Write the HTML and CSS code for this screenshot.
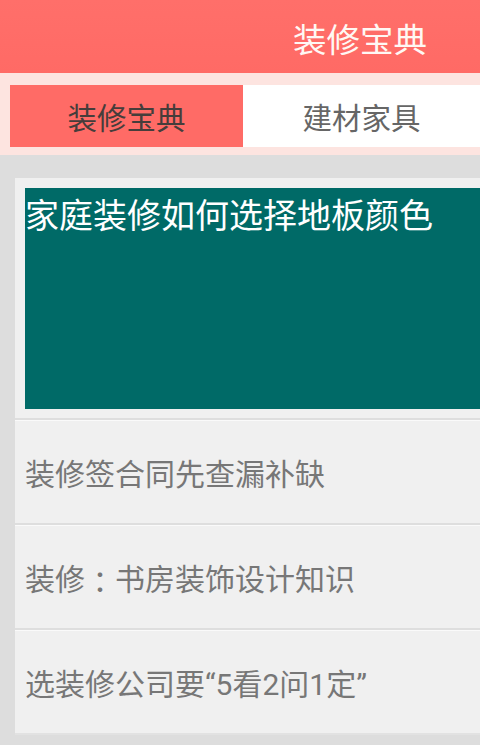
FILE: index.html
```html
<!DOCTYPE html>
<html lang="zh-CN">
<head>
<meta charset="utf-8">
<title>装修宝典</title>
<link rel="stylesheet" href="styles.css">
</head>
<body>
<header class="topbar">
  <h1 class="topbar-title">装修宝典</h1>
</header>
<nav class="tabs">
  <div class="tab tab-active">装修宝典</div>
  <div class="tab">建材家具</div>
</nav>
<main class="content">
  <section class="card">
    <div class="feature">
      <div class="feature-box">家庭装修如何选择地板颜色</div>
    </div>
    <div class="row">装修签合同先查漏补缺</div>
    <div class="row">装修<span class="punct">：</span>书房装饰设计知识</div>
    <div class="row">选装修公司要“5看2问1定”</div>
  </section>
</main>
</body>
</html>
```

FILE: styles.css
```css
html, body {
  margin: 0;
  padding: 0;
}
body {
  width: 480px;
  height: 745px;
  overflow: hidden;
  background: #dddddd;
  font-family: "Noto Sans CJK SC", "Noto Sans", sans-serif;
}
.topbar {
  height: 73px;
  background: linear-gradient(#ff6f6a, #ff6a65);
  display: flex;
  align-items: center;
  justify-content: flex-end;
  padding-right: 53px;
}
.topbar-title {
  margin: 0;
  font-size: 33.5px;
  font-weight: normal;
  line-height: 1;
  color: #fff8f4;
  padding-top: 2px;
}
.tabs {
  height: 62px;
  background: #fde4e0;
  padding: 12px 0 8px 10px;
  display: grid;
  grid-template-columns: 233px 1fr;
}
.tab {
  display: flex;
  align-items: center;
  justify-content: center;
  font-size: 29.5px;
  line-height: 1;
  color: #666666;
  background: #ffffff;
  padding-top: 2px;
}
.tab-active {
  background: #ff6b66;
  color: #463d3b;
}
.content {
  padding: 23px 0 0 15px;
}
.card {
  background: #f0f0f0;
  border-bottom: 2px solid #e2e2e2;
}
.feature {
  padding: 10px 0 9px 10px;
}
.feature-box {
  height: 221px;
  background: #006a67;
  color: #ffffff;
  font-size: 34px;
  line-height: 1.2;
  padding-top: 6px;
  box-sizing: border-box;
}
.row {
  height: 105px;
  box-sizing: border-box;
  border-top: 2px solid #dedede;
  box-shadow: inset 0 1px 0 #fafafa;
  display: flex;
  align-items: center;
  padding: 6px 0 0 10px;
  font-family: Roboto, "Noto Sans CJK SC", sans-serif;
  font-size: 30px;
  line-height: 1;
  color: #777777;
}
.punct {
  font-family: "Noto Sans CJK TC", sans-serif;
}
```
